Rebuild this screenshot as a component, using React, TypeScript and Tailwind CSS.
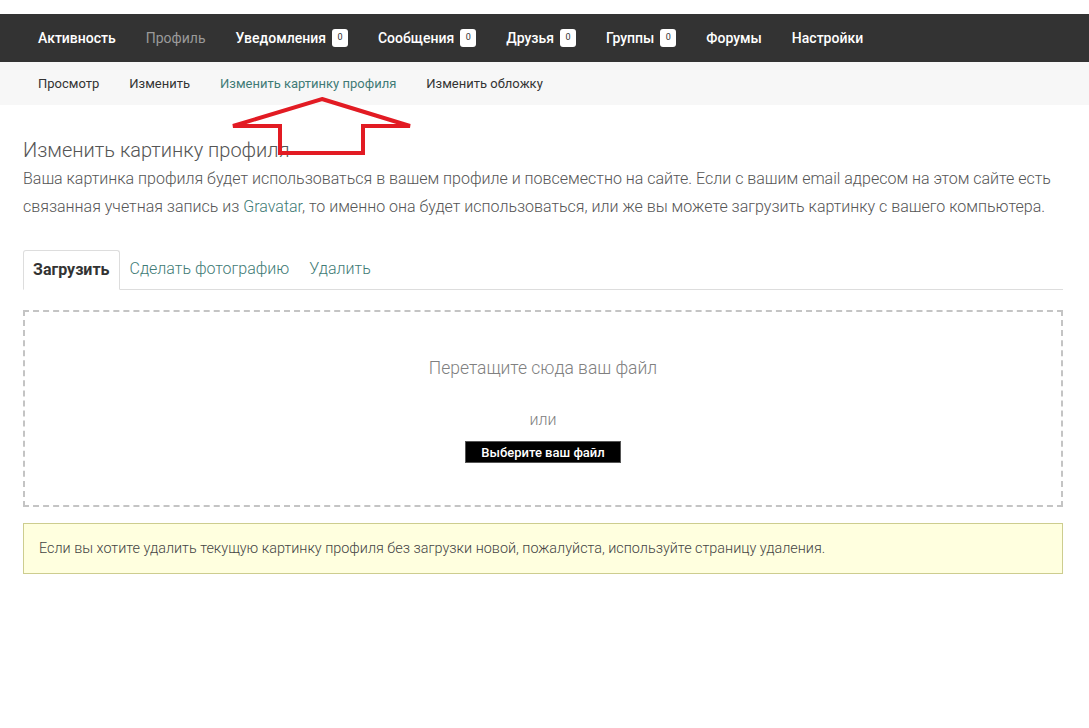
import React from 'react';

const topNav = [
  { label: 'Активность' },
  { label: 'Профиль', current: true },
  { label: 'Уведомления', count: 0 },
  { label: 'Сообщения', count: 0 },
  { label: 'Друзья', count: 0 },
  { label: 'Группы', count: 0 },
  { label: 'Форумы' },
  { label: 'Настройки' },
];

const subNav = [
  { label: 'Просмотр' },
  { label: 'Изменить' },
  { label: 'Изменить картинку профиля', current: true },
  { label: 'Изменить обложку' },
];

const App: React.FC = () => {
  return (
    <div className="relative min-h-screen bg-white text-[#555] font-['Roboto',_'Liberation_Sans',_sans-serif]">
      <div className="h-[14px]" />

      {/* Main nav */}
      <nav className="h-12 bg-[#333] flex items-center pl-[23px]">
        {topNav.map((item) => (
          <a
            key={item.label}
            href="#"
            className={`flex items-center px-[15px] text-[14px] ${item.current ? 'text-[#9a9a9a] font-normal' : 'text-white font-medium'}`}
          >
            {item.label}
            {item.count !== undefined && (
              <span className="ml-[6px] inline-flex items-center justify-center w-4 h-[18px] rounded-[3px] bg-white text-[#333] text-[9px] font-normal">
                {item.count}
              </span>
            )}
          </a>
        ))}
      </nav>

      {/* Sub nav */}
      <nav className="h-[43px] bg-[#f7f7f7] flex items-center pl-[23px]">
        {subNav.map((item) => (
          <a
            key={item.label}
            href="#"
            className={`px-[15px] text-[13px] ${item.current ? 'text-[#3f7b76]' : 'text-[#333]'}`}
          >
            {item.label}
          </a>
        ))}
      </nav>

      <main className="pl-[23px] w-[1063px]">
        <h2 className="mt-[30px] text-[20px] font-light leading-[30px] text-[#555]">Изменить картинку профиля</h2>
        <p className="text-[16px] font-light leading-[28px] text-[#555]">
          Ваша картинка профиля будет использоваться в вашем профиле и повсеместно на сайте. Если с вашим email адресом на этом сайте есть
          связанная учетная запись из <a href="#" className="text-[#3f7b76]">Gravatar</a>, то именно она будет использоваться, или же вы можете загрузить картинку с вашего компьютера.
        </p>

        {/* Tabs */}
        <div className="mt-[29px] flex items-end border-b border-[#ddd] h-10">
          <button className="h-10 px-[9px] -mb-px bg-white border border-[#ddd] border-b-white rounded-t-[3px] text-[16px] font-bold text-[#333]">
            Загрузить
          </button>
          <button className="h-10 px-[10px] text-[16px] font-light text-[#3f7b76]">Сделать фотографию</button>
          <button className="h-10 px-[10px] text-[16px] font-light text-[#3f7b76]">Удалить</button>
        </div>

        {/* Drop zone */}
        <div className="mt-5 h-[197px] border-2 border-dashed border-[#c4c4c4] flex flex-col items-center">
          <div className="mt-[43px] text-[17.5px] font-light text-[#808080]">Перетащите сюда ваш файл</div>
          <div className="mt-[27px] text-[16px] font-light text-[#808080]">или</div>
          <button className="mt-[9px] w-[156px] h-[22px] bg-black border border-[#555] text-white text-[13px] font-medium">
            Выберите ваш файл
          </button>
        </div>

        {/* Notice */}
        <div className="mt-[16px] h-[51px] bg-[#ffffdf] border border-[#cdcd8f] flex items-center px-[15px] text-[14.4px] font-light text-[#444]">
          Если вы хотите удалить текущую картинку профиля без загрузки новой, пожалуйста, используйте страницу удаления.
        </div>
      </main>

      {/* Red arrow annotation */}
      <svg className="absolute left-0 top-0 pointer-events-none" width="1089" height="200" viewBox="0 0 1089 200">
        <polygon
          points="322,99 410,126 363,126 363,153 280,153 280,126 233,126"
          fill="none"
          stroke="#e21b23"
          strokeWidth="4"
          strokeLinejoin="miter"
        />
      </svg>
    </div>
  );
};

export default App;
